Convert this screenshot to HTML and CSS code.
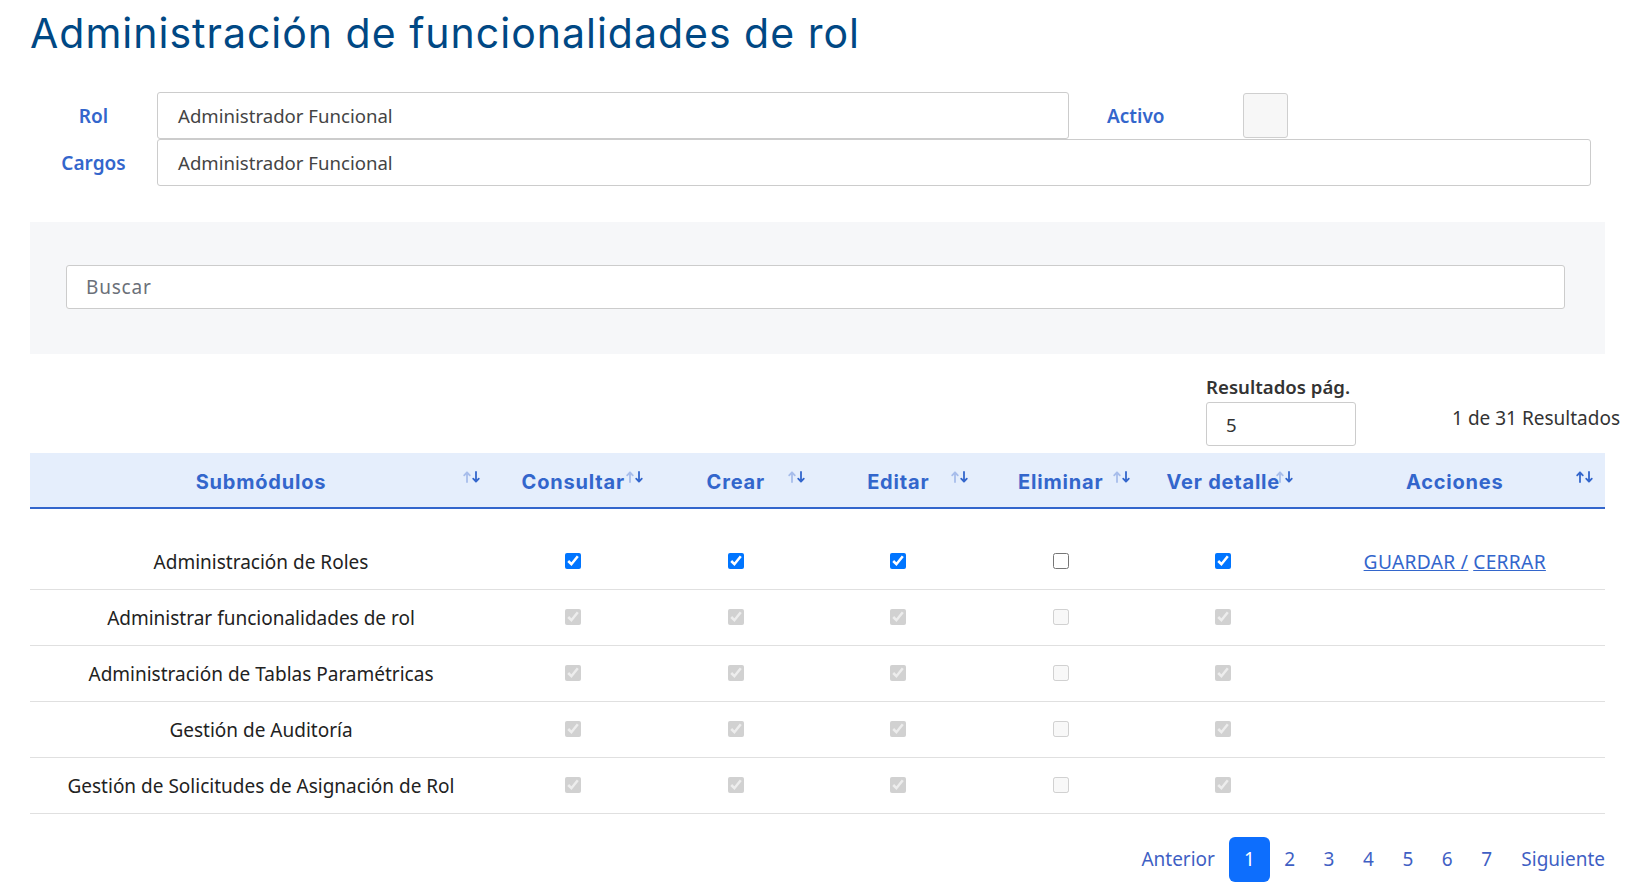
FILE: index.html
```html
<!DOCTYPE html>
<html lang="es">
<head>
<meta charset="utf-8">
<title>Administración de funcionalidades de rol</title>
<link rel="stylesheet" href="styles.css">
</head>
<body>
<div class="page">
  <h1 class="title">Administración de funcionalidades de rol</h1>

  <div class="form">
    <div class="form-row">
      <label class="form-label">Rol</label>
      <div class="field field-rol">Administrador Funcional</div>
      <label class="form-label activo-label">Activo</label>
      <div class="activo-box"></div>
    </div>
    <div class="form-row">
      <label class="form-label">Cargos</label>
      <div class="field field-cargos">Administrador Funcional</div>
    </div>
  </div>

  <div class="search-panel">
    <div class="search-input">Buscar</div>
  </div>

  <div class="results-bar">
    <div class="per-page">
      <div class="per-page-label">Resultados pág.</div>
      <div class="per-page-input">5</div>
    </div>
    <div class="results-count">1 de 31 Resultados</div>
  </div>

  <table class="grid">
    <colgroup>
      <col class="c-name">
      <col class="c-chk"><col class="c-chk"><col class="c-chk"><col class="c-chk"><col class="c-chk">
      <col class="c-act">
    </colgroup>
    <thead>
      <tr>
        <th>Submódulos<span class="sort"><svg viewBox="0 0 18 12" width="18" height="12"><path class="up" d="M4 11V1.5M1.2 4.3L4 1.3l2.8 3"/><path class="down" d="M13 1v9.5M10.2 7.7L13 10.7l2.8-3"/></svg></span></th>
        <th>Consultar<span class="sort"><svg viewBox="0 0 18 12" width="18" height="12"><path class="up" d="M4 11V1.5M1.2 4.3L4 1.3l2.8 3"/><path class="down" d="M13 1v9.5M10.2 7.7L13 10.7l2.8-3"/></svg></span></th>
        <th>Crear<span class="sort"><svg viewBox="0 0 18 12" width="18" height="12"><path class="up" d="M4 11V1.5M1.2 4.3L4 1.3l2.8 3"/><path class="down" d="M13 1v9.5M10.2 7.7L13 10.7l2.8-3"/></svg></span></th>
        <th>Editar<span class="sort"><svg viewBox="0 0 18 12" width="18" height="12"><path class="up" d="M4 11V1.5M1.2 4.3L4 1.3l2.8 3"/><path class="down" d="M13 1v9.5M10.2 7.7L13 10.7l2.8-3"/></svg></span></th>
        <th>Eliminar<span class="sort"><svg viewBox="0 0 18 12" width="18" height="12"><path class="up" d="M4 11V1.5M1.2 4.3L4 1.3l2.8 3"/><path class="down" d="M13 1v9.5M10.2 7.7L13 10.7l2.8-3"/></svg></span></th>
        <th>Ver detalle<span class="sort"><svg viewBox="0 0 18 12" width="18" height="12"><path class="up" d="M4 11V1.5M1.2 4.3L4 1.3l2.8 3"/><path class="down" d="M13 1v9.5M10.2 7.7L13 10.7l2.8-3"/></svg></span></th>
        <th>Acciones<span class="sort sort-dark"><svg viewBox="0 0 18 12" width="18" height="12"><path class="up" d="M4 11V1.5M1.2 4.3L4 1.3l2.8 3"/><path class="down" d="M13 1v9.5M10.2 7.7L13 10.7l2.8-3"/></svg></span></th>
      </tr>
    </thead>
    <tbody>
      <tr class="spacer"><td colspan="7"></td></tr>
      <tr class="editing">
        <td>Administración de Roles</td>
        <td><input type="checkbox" checked></td>
        <td><input type="checkbox" checked></td>
        <td><input type="checkbox" checked></td>
        <td><input type="checkbox"></td>
        <td><input type="checkbox" checked></td>
        <td><a href="#" class="act-link">GUARDAR /</a> <a href="#" class="act-link">CERRAR</a></td>
      </tr>
      <tr>
        <td>Administrar funcionalidades de rol</td>
        <td><input type="checkbox" checked disabled></td>
        <td><input type="checkbox" checked disabled></td>
        <td><input type="checkbox" checked disabled></td>
        <td><input type="checkbox" disabled></td>
        <td><input type="checkbox" checked disabled></td>
        <td></td>
      </tr>
      <tr>
        <td>Administración de Tablas Paramétricas</td>
        <td><input type="checkbox" checked disabled></td>
        <td><input type="checkbox" checked disabled></td>
        <td><input type="checkbox" checked disabled></td>
        <td><input type="checkbox" disabled></td>
        <td><input type="checkbox" checked disabled></td>
        <td></td>
      </tr>
      <tr>
        <td>Gestión de Auditoría</td>
        <td><input type="checkbox" checked disabled></td>
        <td><input type="checkbox" checked disabled></td>
        <td><input type="checkbox" checked disabled></td>
        <td><input type="checkbox" disabled></td>
        <td><input type="checkbox" checked disabled></td>
        <td></td>
      </tr>
      <tr>
        <td>Gestión de Solicitudes de Asignación de Rol</td>
        <td><input type="checkbox" checked disabled></td>
        <td><input type="checkbox" checked disabled></td>
        <td><input type="checkbox" checked disabled></td>
        <td><input type="checkbox" disabled></td>
        <td><input type="checkbox" checked disabled></td>
        <td></td>
      </tr>
    </tbody>
  </table>

  <nav class="pager">
    <a href="#" class="pg pg-text">Anterior</a>
    <a href="#" class="pg pg-num active">1</a>
    <a href="#" class="pg pg-num">2</a>
    <a href="#" class="pg pg-num">3</a>
    <a href="#" class="pg pg-num">4</a>
    <a href="#" class="pg pg-num">5</a>
    <a href="#" class="pg pg-num">6</a>
    <a href="#" class="pg pg-num">7</a>
    <a href="#" class="pg pg-text pg-last">Siguiente</a>
  </nav>
</div>
</body>
</html>
```

FILE: styles.css
```css
* { box-sizing: border-box; }

body {
  margin: 0;
  background: #ffffff;
  font-family: "Noto Sans", "Open Sans", "Liberation Sans", sans-serif;
  color: #333333;
}

.page {
  padding: 0 31px 0 30px;
}

.title {
  margin: 0;
  padding-top: 9px;
  font-family: "Inter", "Noto Sans", sans-serif;
  font-weight: 400;
  font-size: 41px;
  line-height: 48px;
  color: #004884;
  letter-spacing: 1px;
}

.form {
  margin-top: 35px;
}

.form-row {
  display: flex;
  align-items: center;
}

.form-label {
  width: 127px;
  text-align: center;
  font-size: 19px;
  font-weight: 600;
  color: #3366cc;
}

.field {
  height: 47px;
  display: flex;
  align-items: center;
  padding: 0 20px;
  border: 1px solid #cccccc;
  border-radius: 3px;
  font-size: 18.6px;
  color: #444444;
  background: #fff;
}

.field-rol {
  width: 912px;
}

.field-cargos {
  flex: 1;
  margin-right: 14px;
}

.activo-label {
  width: auto;
  margin-left: 38px;
  margin-right: 78px;
  text-align: left;
}

.activo-box {
  width: 45px;
  height: 45px;
  border: 1px solid #cfcfcf;
  border-radius: 3px;
  background: #f7f7f7;
}

.search-panel {
  margin-top: 36px;
  background: #f6f7f9;
  padding: 43px 40px 45px 36px;
}

.search-input {
  height: 44px;
  display: flex;
  align-items: center;
  padding: 0 19px;
  border: 1px solid #cccccc;
  border-radius: 3px;
  background: #ffffff;
  font-size: 19px;
  letter-spacing: 0.8px;
  color: #6b7079;
}

.results-bar {
  display: flex;
  justify-content: flex-end;
  align-items: flex-end;
  margin-top: 21px;
  margin-right: -15px;
}

.per-page {
  width: 150px;
  margin-right: 96px;
}

.per-page-label {
  font-size: 18.6px;
  font-weight: 600;
  line-height: 24px;
  color: #333333;
  white-space: nowrap;
}

.per-page-input {
  margin-top: 3px;
  height: 44px;
  display: flex;
  align-items: center;
  padding: 0 19px;
  border: 1px solid #cccccc;
  border-radius: 3px;
  font-size: 18.6px;
  color: #333333;
}

.results-count {
  height: 44px;
  display: flex;
  align-items: center;
  font-size: 19px;
  color: #333333;
  padding-bottom: 12px;
}

.grid {
  margin-top: 7px;
  width: 100%;
  border-collapse: collapse;
  table-layout: fixed;
}

.c-name { width: 462px; }
.c-chk { width: 162.5px; }
.c-act { width: auto; }

.grid th {
  position: relative;
  height: 55px;
  padding: 3px 0 0;
  background: #e5eefc;
  border-bottom: 2px solid #3366cc;
  font-family: "Inter", "Noto Sans", sans-serif;
  font-weight: 700;
  font-size: 20px;
  color: #3366cc;
  text-align: center;
  letter-spacing: 0.8px;
}

.sort {
  position: absolute;
  right: 11px;
  top: 18px;
  display: block;
  line-height: 0;
}

.sort path {
  fill: none;
  stroke-width: 1.8;
  stroke-linecap: round;
  stroke-linejoin: round;
}

.sort .up { stroke: #a7bdeb; }
.sort .down { stroke: #3366cc; }
.sort-dark .up { stroke: #3366cc; }

.grid td {
  height: 56px;
  padding: 2px 0 0;
  border-bottom: 1px solid #e0e0e0;
  text-align: center;
  vertical-align: middle;
  font-size: 19px;
  color: #222222;
}

.grid .spacer td {
  height: 25px;
  padding: 0;
  border-bottom: none;
}

.grid input[type="checkbox"] {
  width: 16px;
  height: 16px;
  margin: 0;
  vertical-align: middle;
  position: relative;
  top: -3px;
}

.act-link {
  color: #3366cc;
  text-decoration: underline;
  font-size: 19.2px;
  letter-spacing: 0.3px;
}

.pager {
  margin-top: 23px;
  display: flex;
  justify-content: flex-end;
  align-items: center;
}

.pg {
  height: 45px;
  display: flex;
  align-items: center;
  justify-content: center;
  font-family: "Noto Sans", "Open Sans", sans-serif;
  font-size: 19px;
  color: #3f5fc4;
  text-decoration: none;
  border-radius: 6px;
}

.pg-text {
  padding: 0 14px;
}

.pg-num {
  width: 39.4px;
}

.pg-last {
  padding-left: 15px;
  padding-right: 0;
}

.pg.active {
  width: 41px;
  background: #0d6efd;
  color: #ffffff;
}
```
